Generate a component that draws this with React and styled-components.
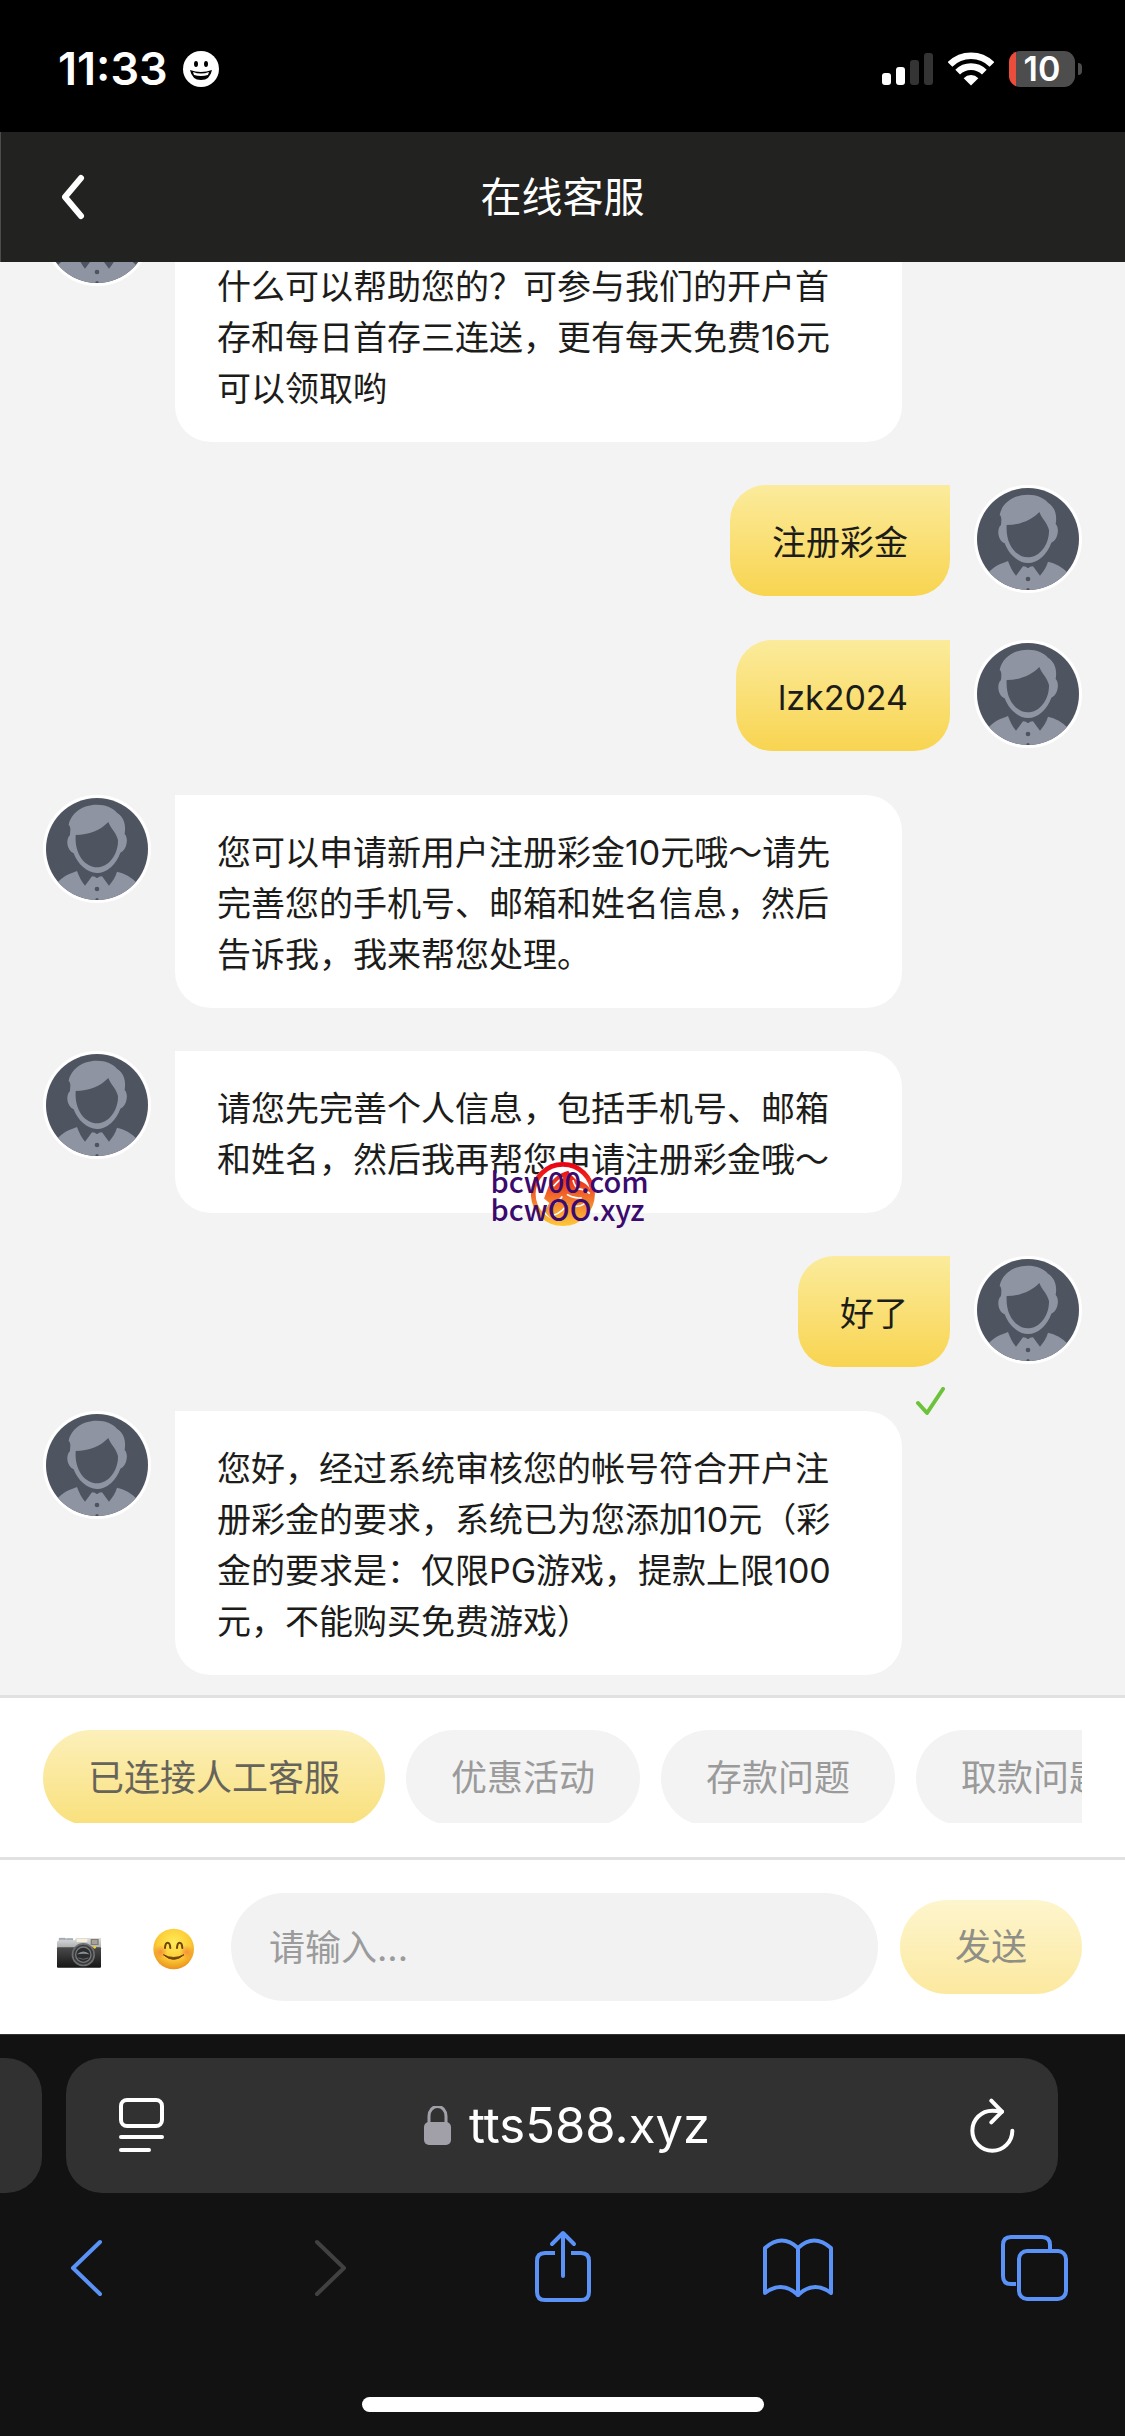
import { useState } from "react";
import styled, { createGlobalStyle, css } from "styled-components";

const messages = [
    { id: 1, from: 'agent', lines: 4, text: '什么可以帮助您的？可参与我们的开户首存和每日首存三连送，更有每天免费16元可以领取哟' },
    { id: 2, from: 'user', text: '注册彩金' },
    { id: 3, from: 'user', text: 'lzk2024' },
    { id: 4, from: 'agent', text: '您可以申请新用户注册彩金10元哦～请先完善您的手机号、邮箱和姓名信息，然后告诉我，我来帮您处理。' },
    { id: 5, from: 'agent', text: '请您先完善个人信息，包括手机号、邮箱和姓名，然后我再帮您申请注册彩金哦～' },
    { id: 6, from: 'user', text: '好了', read: true },
    { id: 7, from: 'agent', text: '您好，经过系统审核您的帐号符合开户注册彩金的要求，系统已为您添加10元（彩金的要求是：仅限PG游戏，提款上限100元，不能购买免费游戏）' },
];

const topics = ['已连接人工客服', '优惠活动', '存款问题', '取款问题'];

const AvatarIcon = () => (
    <svg viewBox="81 54 306 306" width="102" height="102" aria-hidden="true">
        <rect x="81" y="54" width="306" height="306" fill="#4f5461" />
        <path fill="#8f94a3" d="M149 135C155 100 190 74 233 74C262 74 282 84 294 98C314 110 322 134 317 162C329 172 325 210 304 218C292 252 264 279 234 279C204 279 176 252 164 220C142 210 140 176 153 165C154 152 156 140 149 135Z" />
        <path fill="#4f5461" d="M170 165C210 165 245 150 268 126C275 146 291 156 297 180C298 225 268 262 234 262C200 262 166 225 170 165Z" />
        <path fill="#8f94a3" d="M112 312C130 288 155 280 174 273C180 290 188 305 198 317L219 289L228 290Q234 298 240 290L249 289L270 317C280 305 290 290 294 275C315 280 338 290 356 312L340 370H128Z" />
        <circle cx="234" cy="327" r="7" fill="#4f5461" />
        <circle cx="234" cy="359" r="5" fill="#4f5461" />
    </svg>
)

const SmileStatusIcon = () => (
    <svg width="36" height="36" viewBox="0 0 36 36" aria-hidden="true">
        <circle cx="18" cy="18" r="18" fill="#fff" />
        <ellipse cx="13" cy="13" rx="2" ry="3" />
        <ellipse cx="23" cy="13" rx="2" ry="3" />
        <path d="M7 19Q18 23 29 19Q27 29 18 29Q9 29 7 19Z" />
        <path d="M10 21Q18 24 26 21L25 24Q18 26 11 24Z" fill="#fff" />
    </svg>
)

const SignalIcon = () => (
    <svg width="51" height="32" viewBox="0 0 51 32" aria-hidden="true">
        <rect x="0" y="20" width="9" height="12" rx="3" fill="#fff" />
        <rect x="14" y="14" width="9" height="18" rx="3" fill="#fff" />
        <rect x="28" y="7" width="9" height="25" rx="3" fill="#343434" />
        <rect x="42" y="0" width="9" height="32" rx="3" fill="#343434" />
    </svg>
)

const WifiIcon = () => (
    <svg width="46" height="34" viewBox="264 65 138 101" aria-hidden="true">
        <path d="M270 102A89 89 0 0 1 396 102M293 125A57 57 0 0 1 373 125" fill="none" stroke="#fff" strokeWidth="20" />
        <path d="M311 143A31 31 0 0 1 355 143L333 165Z" fill="#fff" />
    </svg>
)

const CameraIcon = () => (
    <svg width="72" height="72" viewBox="39 33 216 216" aria-hidden="true">
        <defs>
            <linearGradient id="camTop" x1="0" y1="0" x2="0" y2="1">
                <stop offset="0" stopColor="#dcdee0" />
                <stop offset="1" stopColor="#a9abad" />
            </linearGradient>
            <linearGradient id="camBody" x1="0" y1="0" x2="0" y2="1">
                <stop offset="0" stopColor="#4b4b4b" />
                <stop offset="1" stopColor="#161616" />
            </linearGradient>
        </defs>
        <path d="M88 122V115H106V122M110 122V116H128V122" fill="#aeb4ba" stroke="#8d9398" strokeWidth="2" />
        <path d="M81 126Q82 121 90 121H134L138 114H213V144H81Z" fill="url(#camTop)" />
        <rect x="140" y="117" width="32" height="9" fill="#f7efd8" />
        <rect x="182" y="117" width="24" height="18" fill="#7d7b74" />
        <rect x="186" y="120" width="16" height="12" fill="#a8a294" />
        <rect x="81" y="142" width="132" height="61" rx="3" fill="url(#camBody)" />
        <circle cx="160" cy="164" r="35" fill="#6d6f71" />
        <circle cx="160" cy="164" r="30" fill="#3a3b3c" />
        <circle cx="160" cy="164" r="25" fill="#77797b" />
        <circle cx="160" cy="164" r="21" fill="#2b2c2d" />
        <path d="M141 163Q160 146 179 163Q160 160 141 163Z" fill="#8b8d90" />
        <path d="M145 174Q160 182 175 174" stroke="#66686a" strokeWidth="3" fill="none" />
        <circle cx="194" cy="142" r="4" fill="#f6cf2c" />
    </svg>
)

const EmojiIcon = () => (
    <svg width="72" height="72" viewBox="321 33 216 216" aria-hidden="true">
        <defs>
            <radialGradient id="face" cx="0.5" cy="0.35" r="0.68">
                <stop offset="0" stopColor="#ffec5a" />
                <stop offset="0.6" stopColor="#fccb35" />
                <stop offset="1" stopColor="#e88a1a" />
            </radialGradient>
            <radialGradient id="cheek">
                <stop offset="0" stopColor="#f2773a" stopOpacity="0.7" />
                <stop offset="1" stopColor="#f2773a" stopOpacity="0" />
            </radialGradient>
        </defs>
        <circle cx="431" cy="147" r="61" fill="url(#face)" />
        <circle cx="392" cy="156" r="21" fill="url(#cheek)" />
        <circle cx="470" cy="156" r="21" fill="url(#cheek)" />
        <path d="M405 144Q406 128 413 128Q420 128 421 144M441 144Q442 128 449 128Q456 128 457 144" fill="none" stroke="#6f4208" strokeWidth="6" strokeLinecap="round" />
        <path d="M400 164Q431 192 462 164Q431 181 400 164Z" fill="#6f4208" stroke="#6f4208" strokeWidth="3" strokeLinejoin="round" />
    </svg>
)

const FlameLogo = () => (
    <svg width="64" height="64" viewBox="155 104 190 190" aria-hidden="true">
        <defs>
            <linearGradient id="flame" gradientUnits="userSpaceOnUse" x1="0" y1="104" x2="0" y2="294">
                <stop offset="0" stopColor="#e60012" />
                <stop offset="0.2" stopColor="#ec1c1a" />
                <stop offset="0.55" stopColor="#f2702a" />
                <stop offset="1" stopColor="#fdc83a" />
            </linearGradient>
        </defs>
        <circle cx="250" cy="199" r="95" fill="#fff" />
        <circle cx="250" cy="199" r="88" fill="none" stroke="url(#flame)" strokeWidth="14" />
        <path fill="url(#flame)" d="M266 130C236 138 212 158 204 186L194 212L210 226L196 250C212 278 240 288 262 286C306 282 334 248 338 204C334 178 314 162 288 156C280 146 270 140 266 130Z" />
        <path d="M222 176Q238 158 250 150M280 158Q284 176 296 184Q316 186 330 198M262 200Q284 214 306 210M212 232Q240 222 248 206M222 262Q252 252 262 228M284 236Q304 236 316 226" fill="none" stroke="#fff" strokeWidth="5" />
    </svg>
)

const PageIcon = () => (
    <svg width="45" height="55" viewBox="0 0 45 55" fill="none" stroke="#fff" strokeWidth="4" aria-hidden="true">
        <rect x="2" y="2" width="41" height="26" rx="6" />
        <path d="M2 39H43M2 52H30" strokeLinecap="round" />
    </svg>
)

const LockIcon = () => (
    <svg width="27" height="40" viewBox="0 0 27 40" aria-hidden="true">
        <path d="M5 18V10A8 9 0 0 1 22 10V18" fill="none" stroke="#a1a0a8" strokeWidth="3" />
        <rect x="0" y="16" width="27" height="23" rx="5" fill="#a1a0a8" />
    </svg>
)

const ReloadIcon = () => (
    <svg width="46" height="56" viewBox="92 46 138 168" fill="none" stroke="#fff" strokeWidth="12" strokeLinecap="round" strokeLinejoin="round" aria-hidden="true">
        <path d="M219 144A60 60 0 1 1 159 84Q174 84 188 87" />
        <path d="M156 54L188 87L156 119" />
    </svg>
)

const toolIcons = {
    back: <path d="M54 14L27 40L54 66" />,
    forward: <path d="M34 14L61 40L34 66" />,
    share: (
        <>
            <path d="M34 25H24Q16 25 16 33V64Q16 72 24 72H60Q68 72 68 64V33Q68 25 60 25H50" strokeLinecap="butt" />
            <path d="M42 48V6M31 16L42 5L53 16" />
        </>
    ),
    book: (
        <>
            <path d="M40 20Q24 5 7 20V65Q24 52 40 67Q56 52 73 65V20Q56 5 40 20Z" />
            <path d="M40 20V67" />
        </>
    ),
    tabs: (
        <>
            <path d="M21 56H16Q8 56 8 48V17Q8 9 16 9H47Q55 9 55 17V22" strokeLinecap="butt" />
            <rect x="24" y="23" width="47" height="48" rx="8" />
        </>
    ),
};

const tools = [
    { name: 'back', label: '后退' },
    { name: 'forward', label: '前进', disabled: true },
    { name: 'share', label: '共享' },
    { name: 'book', label: '书签' },
    { name: 'tabs', label: '标签页' },
];

const App = () => {
    const [draft, setDraft] = useState('');
    const [topic, setTopic] = useState(topics[0]);

    return (
        <Page>
            <GlobalStyle />
            <StatusBar>
                <StatusGroup>
                    <Clock>11:33</Clock>
                    <SmileStatusIcon />
                </StatusGroup>
                <StatusGroup>
                    <SignalIcon />
                    <WifiIcon />
                    <Battery><BatteryBody>10</BatteryBody><BatteryTip /></Battery>
                </StatusGroup>
            </StatusBar>

            <Header>
                <BackButton type="button" aria-label="返回">
                    <svg width="24" height="46" viewBox="0 0 24 46" fill="none" stroke="#fff" strokeWidth="6" aria-hidden="true">
                        <path d="M20 4L4 23L20 42" strokeLinecap="round" strokeLinejoin="round" />
                    </svg>
                </BackButton>
                <Title>在线客服</Title>
            </Header>

            <Chat>
                {messages.map((m) => (
                    <Message key={m.id} $from={m.from}>
                        <Avatar><AvatarIcon /></Avatar>
                        <Bubble $from={m.from} $lines={m.lines}>
                            {m.text}
                            {m.read && (
                                <ReadMark width="30" height="30" viewBox="0 0 30 30" aria-hidden="true">
                                    <path d="M2 16L11 26L27 2" />
                                </ReadMark>
                            )}
                        </Bubble>
                    </Message>
                ))}
            </Chat>

            <Topics>
                <TopicList>
                    {topics.map((t) => (
                        <Topic key={t} type="button" $active={t === topic} onClick={() => setTopic(t)}>{t}</Topic>
                    ))}
                </TopicList>
            </Topics>

            <Composer onSubmit={(e) => e.preventDefault()}>
                <IconButton type="button" aria-label="图片"><CameraIcon /></IconButton>
                <IconButton type="button" aria-label="表情"><EmojiIcon /></IconButton>
                <MessageInput
                    aria-label="请输入"
                    placeholder="请输入..."
                    value={draft}
                    onChange={(e) => setDraft(e.target.value)}
                />
                <SendButton type="submit">发送</SendButton>
            </Composer>

            <Browser>
                <Tabs>
                    <PreviousTab />
                    <AddressBar>
                        <IconButton type="button" aria-label="页面设置"><PageIcon /></IconButton>
                        <Address href="#"><LockIcon />tts588.xyz</Address>
                        <IconButton type="button" aria-label="重新载入"><ReloadIcon /></IconButton>
                    </AddressBar>
                </Tabs>
                <Toolbar>
                    {tools.map((t) => (
                        <ToolButton key={t.name} type="button" aria-label={t.label} disabled={t.disabled}>
                            <svg width="80" height="80" viewBox="0 0 80 80" aria-hidden="true">{toolIcons[t.name]}</svg>
                        </ToolButton>
                    ))}
                </Toolbar>
                <HomeIndicator />
            </Browser>

            <Watermark>
                <FlameLogo />
                <WatermarkText>
                    <span>bcw00.com</span>
                    <span>bcwOO.xyz</span>
                </WatermarkText>
            </Watermark>
        </Page>
    )
}
export default App;

const GlobalStyle = createGlobalStyle`
    * {
        box-sizing: border-box;
    }
    body {
        margin: 0;
        background: #121212;
        font-family: Inter, "Noto Sans CJK SC", sans-serif;
    }
    button, input {
        font-family: inherit;
        border: none;
        margin: 0;
    }
    button {
        padding: 0;
        background: none;
        cursor: pointer;
    }
    svg {
        display: block;
        flex: none;
    }
`

const Page = styled.div`
    position: relative;
    display: flex;
    flex-direction: column;
    height: 100vh;
    overflow: hidden;
`

const StatusBar = styled.div`
    flex: none;
    display: flex;
    justify-content: space-between;
    height: 132px;
    padding: 48px 43px 42px 58px;
    background: #000;
    color: #fff;
`

const StatusGroup = styled.div`
    display: flex;
    align-items: center;
    gap: 15px;
`

const Clock = styled.span`
    font-size: 45px;
    font-weight: 600;
    line-height: 42px;
`

const Battery = styled.div`
    display: flex;
    align-items: center;
    gap: 3px;
`

const BatteryBody = styled.div`
    width: 66px;
    height: 36px;
    border-radius: 11px;
    background: linear-gradient(to right, #eb4d3d 7px, #4d4d4d 7px);
    font-size: 34px;
    font-weight: 600;
    line-height: 36px;
    text-align: center;
`

const BatteryTip = styled.div`
    width: 4px;
    height: 12px;
    border-radius: 0 4px 4px 0;
    background: #4d4d4d;
`

const Header = styled.header`
    flex: none;
    display: grid;
    grid-template-columns: 1fr auto 1fr;
    align-items: center;
    height: 130px;
    padding: 0 43px;
    box-shadow: inset 1px 0 #4c4c4a;
    background: #222220;
    color: #fff;
`

const BackButton = styled.button`
    justify-self: start;
    padding: 18px;
`

const Title = styled.h1`
    margin: 0;
    font-size: 41px;
    font-weight: 400;
    line-height: 60px;
`

const Chat = styled.main`
    flex: 1;
    min-height: 0;
    display: flex;
    flex-direction: column;
    justify-content: flex-end;
    overflow: hidden;
    padding: 0 43px 20px;
    background: #f3f3f3;
`

const Message = styled.div`
    flex: none;
    display: flex;
    flex-direction: ${(props) => props.$from === 'user' ? 'row-reverse' : 'row'};
    align-items: flex-start;
    gap: 24px;
    margin-bottom: ${(props) => props.$from === 'user' ? '44px' : '43px'};
    &:last-child {
        margin-bottom: 0;
    }
`

const Avatar = styled.div`
    flex: none;
    border: 3px solid #fff;
    border-radius: 50%;
    overflow: hidden;
`

const agentBubble = css`
    border-radius: 0 36px 36px 36px;
    background: #fff;
`

const userBubble = css`
    border-radius: 36px 0 36px 36px;
    background: linear-gradient(#fbeb9c, #f8d450);
`

const Bubble = styled.div`
    position: relative;
    max-width: 70%;
    min-height: ${(props) => (props.$lines || 1) * 51 + 60}px;
    padding: 32px 42px 28px;
    align-content: end;
    color: #1c1c1a;
    font-size: 34px;
    line-height: 51px;
    ${(props) => props.$from === 'user' ? userBubble : agentBubble}
`

const ReadMark = styled.svg`
    position: absolute;
    top: calc(100% + 20px);
    right: 4px;
    fill: none;
    stroke: #6cc23a;
    stroke-width: 4;
    stroke-linecap: round;
    stroke-linejoin: round;
`

const Topics = styled.div`
    flex: none;
    padding: 32px 43px 34px;
    border-top: 3px solid #e1e1e1;
    background: #fff;
`

const TopicList = styled.div`
    display: flex;
    align-items: flex-start;
    gap: 21px;
    height: 93px;
    overflow: hidden;
`

const Topic = styled.button`
    flex: none;
    height: 96px;
    padding: 0 45px;
    border-radius: 48px;
    background: ${(props) => props.$active ? 'linear-gradient(#fcf0ba, #f9e07c)' : '#f3f3f3'};
    color: ${(props) => props.$active ? '#66645a' : '#9a9a9a'};
    font-size: 36px;
    line-height: 54px;
`

const Composer = styled.form`
    flex: none;
    display: flex;
    align-items: center;
    gap: 22px;
    padding: 33px 43px;
    border-top: 3px solid #e1e1e1;
    background: #fff;
`

const IconButton = styled.button`
    flex: none;
`

const MessageInput = styled.input`
    flex: 1;
    min-width: 0;
    height: 108px;
    padding: 2px 38px 0;
    border-radius: 54px;
    outline: none;
    background: #f2f2f2;
    color: #1c1c1a;
    font-size: 36px;
    &::placeholder {
        color: #9b9b9b;
        opacity: 1;
    }
`

const SendButton = styled.button`
    flex: none;
    height: 94px;
    padding: 0 55px;
    border-radius: 47px;
    background: linear-gradient(#fdf5cd, #fce9a0);
    color: #8f8e87;
    font-size: 36px;
    line-height: 54px;
`

const Browser = styled.footer`
    flex: none;
    border-top: 1px solid #333;
    padding: 23px 0 24px;
    background: #121212;
`

const Tabs = styled.div`
    display: flex;
    gap: 24px;
    padding-right: 67px;
`

const PreviousTab = styled.div`
    flex: none;
    width: 42px;
    border-radius: 0 36px 36px 0;
    background: #313131;
`

const AddressBar = styled.div`
    flex: 1;
    display: flex;
    align-items: center;
    justify-content: space-between;
    height: 135px;
    padding: 0 42px 0 53px;
    border-radius: 36px;
    background: #313131;
`

const Address = styled.a`
    display: flex;
    align-items: center;
    gap: 18px;
    color: #fff;
    font-size: 49px;
    line-height: 60px;
    text-decoration: none;
`

const Toolbar = styled.nav`
    display: flex;
    justify-content: space-between;
    padding: 35px 50px 0 46px;
`

const ToolButton = styled.button`
    color: #5a92f7;
    svg {
        fill: none;
        stroke: currentColor;
        stroke-width: 4;
        stroke-linecap: round;
        stroke-linejoin: round;
    }
    &:disabled {
        color: #414141;
        cursor: default;
    }
`

const HomeIndicator = styled.div`
    width: 402px;
    height: 15px;
    margin: 89px auto 0;
    border-radius: 8px;
    background: #fff;
`

const Watermark = styled.div`
    position: absolute;
    top: 49%;
    left: 50%;
    display: grid;
    place-items: center;
    pointer-events: none;
    transform: translate(-50%, -50%);
    & > * {
        grid-area: 1 / 1;
    }
`

const WatermarkText = styled.div`
    display: flex;
    flex-direction: column;
    padding-left: 14px;
    color: #3a0a6e;
    font-family: "Noto Sans CJK SC", sans-serif;
    font-size: 29px;
    font-weight: 500;
    line-height: 28px;
`
